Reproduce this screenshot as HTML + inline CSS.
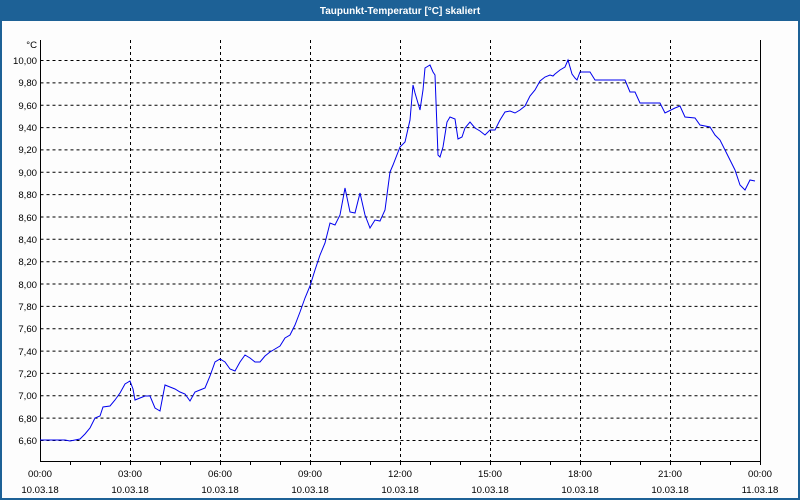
<!DOCTYPE html>
<html><head><meta charset="utf-8"><style>
html,body{margin:0;padding:0;width:800px;height:500px;overflow:hidden;background:#1d6196;}
svg{display:block}
</style></head><body>
<svg width="800" height="500" xmlns="http://www.w3.org/2000/svg" font-family="'Liberation Sans', sans-serif" font-size="9.6">
<rect x="0" y="0" width="800" height="500" fill="#1d6196"/>
<rect x="2" y="21" width="796" height="477" fill="#fdfdfd"/>
<text x="400" y="14" fill="#fff" font-weight="bold" text-anchor="middle" font-size="10">Taupunkt-Temperatur [°C] skaliert</text>
<g stroke="#000" stroke-width="1" stroke-dasharray="3,3" fill="none">
<path d="M40.5 60.5H760M40.5 82.9H760M40.5 105.2H760M40.5 127.6H760M40.5 149.9H760M40.5 172.3H760M40.5 194.6H760M40.5 217H760M40.5 239.3H760M40.5 261.7H760M40.5 284H760M40.5 306.4H760M40.5 328.7H760M40.5 351.1H760M40.5 373.4H760M40.5 395.8H760M40.5 418.1H760M40.5 440.5H760"/>
<path d="M130.5 40V461M220.5 40V461M310.5 40V461M400.5 40V461M490.5 40V461M580.5 40V461M670.5 40V461"/>
</g>
<g stroke="#000" stroke-width="1" fill="none">
<path d="M40.5 40V461.5H760.5V40"/>
<path d="M70.5 461v4M100.5 461v4M130.5 461v4M160.5 461v4M190.5 461v4M220.5 461v4M250.5 461v4M280.5 461v4M310.5 461v4M340.5 461v4M370.5 461v4M400.5 461v4M430.5 461v4M460.5 461v4M490.5 461v4M520.5 461v4M550.5 461v4M580.5 461v4M610.5 461v4M640.5 461v4M670.5 461v4M700.5 461v4M730.5 461v4M760.5 461v4"/>
</g>
<polyline fill="none" stroke="#0000ee" stroke-width="1" points="40,440 65,440 70,441 75,440 80,439 85,434 90,428 95,418 100,416 103,407 110,406 115,400 120,393 125,384 130,381 133,389 135,400 140,398 145,396 150,396 155,408 160,411 165,385 170,387 175,389 180,392 185,394 190,401 195,392 200,390 205,388 210,376 215,362 220,359 225,362 230,369 235,371 240,362 245,355 250,358 255,362 260,362 265,356 270,352 275,349 280,346 285,338 290,335 295,325 300,312 305,298 310,286 315,270 320,255 325,243 330,223 335,225 340,215 345,188 350,212 355,213 360,193 365,215 370,228 375,220 380,221 385,210 390,172 393,165 400,147 405,142 410,120 413,85 415,93 420,110 423,90 425,68 430,65 433,72 435,75 438,155 440,157 443,147 447,122 450,117 455,119 458,139 462,137 465,128 470,122 475,128 480,131 485,135 490,130 495,130 500,120 505,112 510,111 515,113 520,110 525,106 530,96 535,90 540,81 545,77 550,75 553,76 555,74 560,70 565,67 568,60 572,74 575,78 577,80 580,72 590,72 595,80 625,80 630,92 635,92 640,103 660,103 665,113 675,108 680,106 685,117 695,118 700,125 710,127 715,135 720,140 725,150 735,170 740,185 745,190 750,180 755,181"/>
<g fill="#000" text-anchor="end">
<text x="37" y="48">°C</text>
<text x="37" y="64">10,00</text><text x="37" y="86">9,80</text><text x="37" y="109">9,60</text><text x="37" y="131">9,40</text><text x="37" y="153">9,20</text><text x="37" y="176">9,00</text><text x="37" y="198">8,80</text><text x="37" y="221">8,60</text><text x="37" y="243">8,40</text><text x="37" y="265">8,20</text><text x="37" y="288">8,00</text><text x="37" y="310">7,80</text><text x="37" y="332">7,60</text><text x="37" y="355">7,40</text><text x="37" y="377">7,20</text><text x="37" y="399">7,00</text><text x="37" y="422">6,80</text><text x="37" y="444">6,60</text>
</g>
<g fill="#000" text-anchor="middle">
<text x="40" y="477">00:00</text><text x="130" y="477">03:00</text><text x="220" y="477">06:00</text><text x="310" y="477">09:00</text><text x="400" y="477">12:00</text><text x="490" y="477">15:00</text><text x="580" y="477">18:00</text><text x="670" y="477">21:00</text><text x="760" y="477">00:00</text>
<text x="40" y="493">10.03.18</text><text x="130" y="493">10.03.18</text><text x="220" y="493">10.03.18</text><text x="310" y="493">10.03.18</text><text x="400" y="493">10.03.18</text><text x="490" y="493">10.03.18</text><text x="580" y="493">10.03.18</text><text x="670" y="493">10.03.18</text><text x="760" y="493">11.03.18</text>
</g>
</svg>
</body></html>
